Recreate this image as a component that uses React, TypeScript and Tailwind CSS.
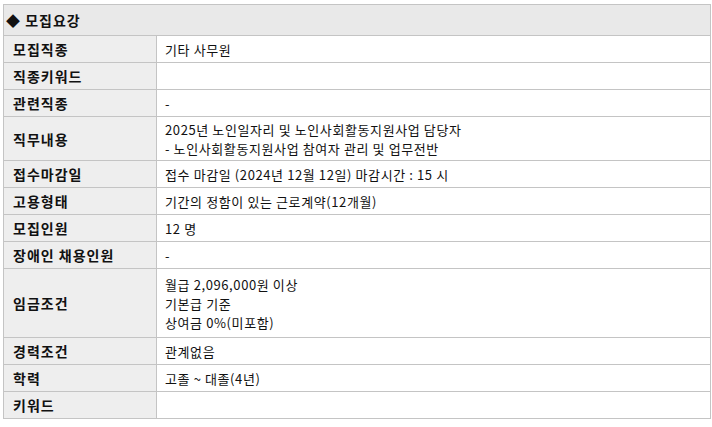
type Row = { label: string; lines: string[]; h: string };

const rows: Row[] = [
  { label: "모집직종", lines: ["기타 사무원"], h: "h-[27px]" },
  { label: "직종키워드", lines: [], h: "h-[27px]" },
  { label: "관련직종", lines: ["-"], h: "h-[27px]" },
  {
    label: "직무내용",
    lines: [
      "2025년 노인일자리 및 노인사회활동지원사업 담당자",
      "- 노인사회활동지원사업 참여자 관리 및 업무전반",
    ],
    h: "h-[44px]",
  },
  {
    label: "접수마감일",
    lines: ["접수 마감일 (2024년 12월 12일) 마감시간 : 15 시"],
    h: "h-[27px]",
  },
  { label: "고용형태", lines: ["기간의 정함이 있는 근로계약(12개월)"], h: "h-[27px]" },
  { label: "모집인원", lines: ["12 명"], h: "h-[27px]" },
  { label: "장애인 채용인원", lines: ["-"], h: "h-[27px]" },
  {
    label: "임금조건",
    lines: ["월급 2,096,000원 이상", "기본급 기준", "상여금 0%(미포함)"],
    h: "h-[69px]",
  },
  { label: "경력조건", lines: ["관계없음"], h: "h-[27px]" },
  { label: "학력", lines: ["고졸 ~ 대졸(4년)"], h: "h-[27px]" },
  { label: "키워드", lines: [], h: "h-[27px]" },
];

export default function App() {
  return (
    <div
      className="w-[712px] h-[427px] bg-white pl-[3px] pt-[4px] text-[13px] text-[#111]"
      style={{ fontFamily: '"Noto Sans CJK KR", "Noto Sans", sans-serif' }}
    >
      <table className="w-[708px] border-collapse table-fixed">
        <colgroup>
          <col className="w-[153px]" />
          <col />
        </colgroup>
        <tbody>
          <tr className="h-[31px]">
            <td
              colSpan={2}
              className="border border-[#c4c4c4] bg-[#e9e9e9] pl-[2px] text-[14px] font-bold leading-none tracking-[1px]"
            >
              ◆ 모집요강
            </td>
          </tr>
          {rows.map((row) => (
            <tr key={row.label} className={row.h}>
              <td className="border border-[#c4c4c4] bg-[#eeeeee] pl-[9px] text-[14px] font-bold leading-none tracking-[1px]">
                {row.label}
              </td>
              <td className="border border-[#c4c4c4] bg-white pl-[8px] leading-[19px] tracking-[0.6px]">
                {row.lines.map((line) => (
                  <div key={line}>{line}</div>
                ))}
              </td>
            </tr>
          ))}
        </tbody>
      </table>
    </div>
  );
}
